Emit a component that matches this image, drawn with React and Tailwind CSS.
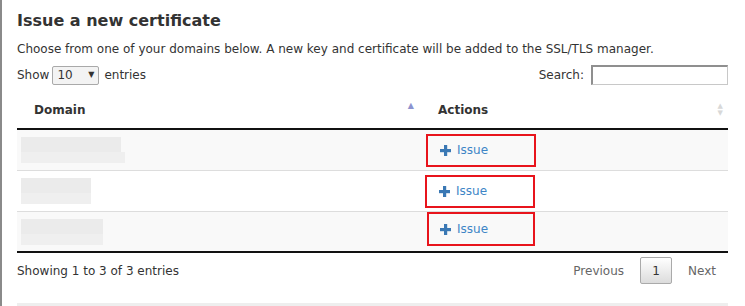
import React from "react";

const font = { fontFamily: '"DejaVu Sans", Verdana, sans-serif' };

function Blur({ w1, w2 }) {
  return (
    <div className="flex flex-col ml-[4px]">
      <div className="h-[15px] flex">
        <div className="h-full bg-[#ebebeb]" style={{ width: w1 }} />
      </div>
      <div className="h-[11px] flex">
        <div className="h-full bg-[#efefef]" style={{ width: w2 }} />
      </div>
    </div>
  );
}

function Plus() {
  return (
    <svg width="11" height="11" viewBox="0 0 11 11" className="mr-[6px]">
      <rect x="4" y="0" width="3.2" height="11" fill="#3a78b4" />
      <rect x="0" y="4" width="11" height="3.2" fill="#3a78b4" />
    </svg>
  );
}

function Row({ bg, w1, w2, boxClass }) {
  return (
    <div className={`flex items-center h-[41px] border-b border-[#dddddd] ${bg}`}>
      <div className="w-[404px] flex items-center">
        <Blur w1={w1} w2={w2} />
      </div>
      <div className="flex-1 flex items-center">
        <a
          className={`flex items-center h-[33px] w-[110px] border-2 border-[#e8141c] pl-[12px] text-[#3d85c6] text-[12px] ${boxClass}`}
        >
          <Plus />
          Issue
        </a>
      </div>
    </div>
  );
}

export default function App() {
  return (
    <div className="w-[745px] h-[306px] bg-white overflow-hidden" style={font}>
      <div className="h-full border-l-2 border-[#8a8a8a] pl-[15px] pr-[17px] text-[#333333]">
        <h2 className="pt-[10px] text-[16px] leading-[22px] font-bold text-[#333333]">
          Issue a new certificate
        </h2>
        <p className="mt-[9px] text-[12px] leading-[16px]">
          Choose from one of your domains below. A new key and certificate will be added to the SSL/TLS manager.
        </p>
        <div className="mt-[8px] flex items-center justify-between text-[12px]">
          <div className="flex items-center">
            <span>Show</span>
            <div className="ml-[3px] mr-[5px] h-[19px] w-[47px] border border-[#a9a9a9] rounded-[2px] bg-[#f3f3f3] flex items-center justify-between px-[4px]">
              <span className="text-[12px]">10</span>
              <span className="text-[8px]">▼</span>
            </div>
            <span>entries</span>
          </div>
          <div className="flex items-center">
            <span>Search:</span>
            <div className="ml-[7px] h-[20px] w-[137px] border border-[#c8c8c8] border-t-[#8f8f8f] border-l-[#8f8f8f] border-t-2 border-l-2 bg-white" />
          </div>
        </div>
        <div className="mt-[7px] w-[711px]">
          <div className="flex items-center h-[38px] border-b-2 border-[#111111] text-[12px] font-bold">
            <div className="w-[404px] flex items-center justify-between pl-[17px] pr-[7px]">
              <span>Domain</span>
              <span className="text-[8px] text-[#8c93cf] -mt-[8px]">▲</span>
            </div>
            <div className="flex-1 flex items-center justify-between pl-[17px] pr-[5px]">
              <span>Actions</span>
              <span className="flex flex-col leading-[7px] text-[7px] text-[#d8d8d8]">
                <span>▲</span>
                <span>▼</span>
              </span>
            </div>
          </div>
          <Row bg="bg-[#f9f9f9]" w1={100} w2={104} boxClass="ml-[5px]" />
          <Row bg="bg-white" w1={70} w2={70} boxClass="ml-[4px]" />
          <div className="flex items-center h-[41px] border-b-2 border-[#111111] bg-[#f9f9f9]">
            <div className="w-[404px] flex items-center">
              <Blur w1={82} w2={82} />
            </div>
            <div className="flex-1 flex items-start h-full">
              <a className="flex items-center h-[34px] w-[108px] border-2 border-[#e8141c] pl-[11px] text-[#3d85c6] text-[12px] ml-[6px]">
                <Plus />
                Issue
              </a>
            </div>
          </div>
          <div className="flex items-center justify-between h-[35px] text-[12px]">
            <span>Showing 1 to 3 of 3 entries</span>
            <div className="flex items-center text-[#666666]">
              <span className="px-[16px]">Previous</span>
              <span className="h-[27px] w-[32px] flex items-center justify-center border border-[#aaaaaa] rounded-[2px] bg-gradient-to-b from-white to-[#dcdcdc] text-[#333333]">
                1
              </span>
              <span className="pl-[16px] pr-[12px]">Next</span>
            </div>
          </div>
          <div className="mt-[15px] h-[3px] bg-[#eeeeee]" />
        </div>
      </div>
    </div>
  );
}
